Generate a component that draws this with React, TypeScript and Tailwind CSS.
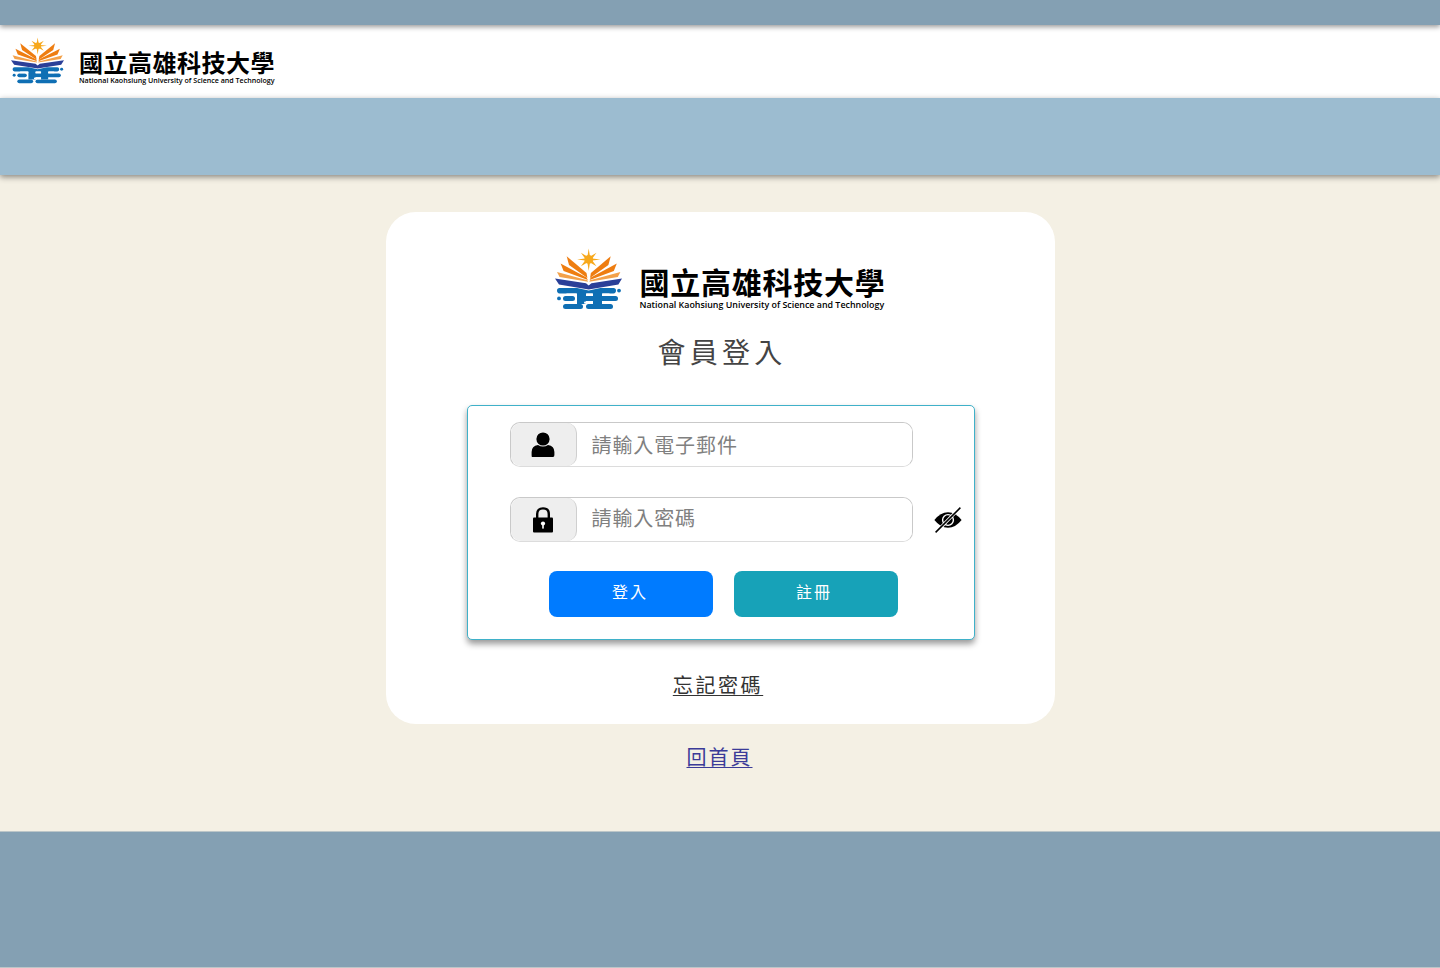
import { useState } from 'react'

const cjk = '"Noto Sans CJK TC", "Noto Sans", sans-serif'

function LogoMark({ className }: { className: string }) {
  return (
    <svg viewBox="0 0 67 62" preserveAspectRatio="none" className={className} aria-hidden="true">
      {/* star */}
      <path
        d="M33.7 0.5 L35 8.6 L41.5 4.8 L37.3 10.4 L45.5 11.4 L37.3 12.6 L41.5 18.2 L35 14.4 L33.7 23 L32.4 14.4 L25.9 18.2 L30.1 12.6 L22 11.4 L30.1 10.4 L25.9 4.8 L32.4 8.6 Z"
        fill="#f7a81b"
      />
      <circle cx="33.7" cy="11.4" r="4.3" fill="#f7a81b" />
      {/* wings */}
      <g fill="#ee7d11">
        <path d="M11.7 8.3 L31.5 25 L32.4 30 L14 17 Z" />
        <path d="M55.7 8.3 L35.9 25 L35 30 L53.4 17 Z" />
        <path d="M5.6 15.6 L31.6 29.4 L32.8 32 L8.6 23 Z" />
        <path d="M61.8 15.6 L35.8 29.4 L34.6 32 L58.8 23 Z" />
      </g>
      <g fill="#f3a14a">
        <path d="M2 24 L32.4 32.2 L33 33.8 L4.6 29 Z" />
        <path d="M65.4 24 L35 32.2 L34.4 33.8 L62.8 29 Z" />
      </g>
      {/* book */}
      <path
        d="M0 30.6 L31 35.3 L33.7 37.6 L36.4 35.3 L67 30.6 L63.4 36.6 L33.7 41.4 L4 36.6 Z"
        fill="#2a3f98"
      />
      {/* water */}
      <g fill="#0f6fb4">
        <path d="M4.5 40 L22 40 L33.7 42.4 L45.4 40 L58.5 40 Q61 40 61 42.6 Q61 45.4 58.5 45.4 L4.5 45.4 Q2 45.4 2 42.6 Q2 40 4.5 40 Z" />
        <circle cx="64" cy="42.6" r="1.9" />
        <circle cx="4" cy="50.4" r="1.9" />
        <rect x="8" y="48" width="12" height="5" rx="2.5" />
        <rect x="22" y="44" width="9" height="12" />
        <rect x="38" y="44" width="9" height="12" />
        <rect x="26" y="48" width="16" height="5" />
        <rect x="44" y="48" width="19" height="5" rx="2.5" />
        <rect x="8" y="56" width="20" height="5" rx="2.5" />
        <rect x="31" y="56" width="27" height="5" rx="2.5" />
      </g>
      <g fill="#fff">
        <rect x="11" y="45.6" width="11" height="2.2" rx="1.1" />
        <rect x="31" y="45.6" width="7" height="2.2" rx="1.1" />
        <rect x="47" y="45.6" width="8" height="2.2" rx="1.1" />
        <rect x="29" y="53.4" width="9" height="2.4" rx="1.2" />
      </g>
    </svg>
  )
}

function UserIcon() {
  return (
    <svg viewBox="0 0 24 26" className="h-[26px] w-[24px]" aria-hidden="true">
      <circle cx="12" cy="7" r="6.6" fill="#000" />
      <path d="M1 25 Q0.6 25 0.6 23 L0.6 20 Q0.6 14 7 13 Q12 16 17 13 Q23.4 14 23.4 20 L23.4 23 Q23.4 25 22 25 Z" fill="#000" />
    </svg>
  )
}

function LockIcon() {
  return (
    <svg viewBox="0 0 20 26" className="h-[26px] w-[20px]" aria-hidden="true">
      <path d="M4.2 12 L4.2 7 Q4.2 1.4 10 1.4 Q15.8 1.4 15.8 7 L15.8 12" fill="none" stroke="#000" strokeWidth="2.4" />
      <path d="M1 10.5 L19 10.5 Q20 10.5 20 11.5 L20 24.5 Q20 25.5 19 25.5 L1 25.5 Q0 25.5 0 24.5 L0 11.5 Q0 10.5 1 10.5 Z" fill="#000" />
      <circle cx="10" cy="16.5" r="2.1" fill="#fff" />
      <rect x="9.2" y="17" width="1.6" height="4.6" fill="#fff" />
    </svg>
  )
}

function EyeSlashIcon() {
  return (
    <svg viewBox="0 0 28 26" className="h-[26px] w-[28px]" aria-hidden="true">
      <path d="M0.4 13 Q6.5 5.2 14 5.2 Q21.5 5.2 27.6 13 Q21.5 20.8 14 20.8 Q6.5 20.8 0.4 13 Z" fill="#000" />
      <circle cx="14" cy="13" r="5.4" fill="none" stroke="#fff" strokeWidth="1.4" />
      <path d="M26 0.6 L2 25.4" stroke="#fff" strokeWidth="3.2" />
      <path d="M26.4 0.6 L1.6 25.4" stroke="#000" strokeWidth="1.5" />
    </svg>
  )
}

function InputRow({
  icon,
  placeholder,
  type,
  inputClass,
  trailing,
}: {
  icon: React.ReactNode
  placeholder: string
  type: string
  inputClass: string
  trailing?: React.ReactNode
}) {
  return (
    <div className="flex items-center">
      <div className="flex h-[45px] w-[403px] overflow-hidden rounded-[10px] border border-[#c9c9c9] border-b-[#dcdcdc]">
        <span className="flex w-[66px] shrink-0 items-center justify-center rounded-[10px] border-r border-[#cfcfcf] bg-[#eeeeee]">
          {icon}
        </span>
        <input
          type={type}
          placeholder={placeholder}
          className={`min-w-0 flex-1 bg-white pl-[15px] text-[20px] tracking-[0.9px] text-black outline-none placeholder:text-[#808080] ${inputClass}`}
        />
      </div>
      {trailing}
    </div>
  )
}

export default function App() {
  const [showPassword, setShowPassword] = useState(false)

  return (
    <div className="flex min-h-[968px] flex-col bg-[#f4f0e4]" style={{ fontFamily: cjk }}>
      <div className="relative z-20 h-[25px] bg-[#84a0b3] shadow-[0_2px_5px_rgba(0,0,0,0.4)]" />

      <header className="flex h-[73px] items-start bg-white pl-[11px] pt-[12px]">
        <LogoMark className="h-[47px] w-[53px]" />
        <div className="ml-[15px] mt-[13px] flex flex-col text-black">
          <span className="text-[24px] font-bold leading-[24px] tracking-[0.5px] whitespace-nowrap">國立高雄科技大學</span>
          <span className="mt-[2px] text-[7.1px] font-semibold leading-[9px] whitespace-nowrap" style={{ fontFamily: '"Open Sans", sans-serif' }}>
            National Kaohsiung University of Science and Technology
          </span>
        </div>
      </header>

      <div className="relative z-10 h-[77px] bg-[#9cbcd0] shadow-[0_2px_6px_rgba(0,0,0,0.45)]" />

      <main className="flex flex-1 flex-col items-center pt-[37px]">
        <div className="flex h-[512px] w-[669px] flex-col items-center rounded-[30px] bg-white pt-[36px]">
          <div className="flex items-start">
            <LogoMark className="h-[62px] w-[67px]" />
            <div className="ml-[18px] mt-[18px] flex w-[246px] flex-col text-black">
              <span className="text-[30px] font-bold leading-[30px] tracking-[0.75px] whitespace-nowrap">國立高雄科技大學</span>
              <span className="mt-[3px] text-[8.9px] font-semibold leading-[11px] whitespace-nowrap" style={{ fontFamily: '"Open Sans", sans-serif' }}>
                National Kaohsiung University of Science and Technology
              </span>
            </div>
          </div>

          <h1 className="mt-[19px] pl-[4px] text-[28px] font-normal leading-[44px] tracking-[4.3px] text-[#444444]">會員登入</h1>

          <div className="ml-[1px] mt-[32px] flex h-[235px] w-[508px] flex-col rounded-[5px] border border-[#3fb1c9] bg-white pl-[42px] pt-[16px] shadow-[0_4px_6px_rgba(0,0,0,0.4)]">
            <InputRow icon={<UserIcon />} placeholder="請輸入電子郵件" type="email" inputClass="pb-0" />
            <div className="mt-[30px]">
              <InputRow
                icon={<LockIcon />}
                placeholder="請輸入密碼"
                type={showPassword ? 'text' : 'password'}
                inputClass="pb-[4px]"
                trailing={
                  <button type="button" onClick={() => setShowPassword(!showPassword)} className="ml-[21px] flex">
                    <EyeSlashIcon />
                  </button>
                }
              />
            </div>
            <div className="mt-[29px] flex gap-[21px] pl-[39px]">
              <button type="button" className="h-[46px] w-[164px] rounded-[8px] bg-[#007bff] pb-[6px] pr-[1px] text-[16px] tracking-[2px] text-white">
                登入
              </button>
              <button type="button" className="h-[46px] w-[164px] rounded-[8px] bg-[#17a2b8] pb-[6px] pr-[3px] text-[16px] tracking-[2px] text-white">
                註冊
              </button>
            </div>
          </div>

          <a href="#" className="mt-[29px] pr-[4px] text-[20px] leading-[32px] tracking-[2.6px] text-[#333333] underline decoration-1 underline-offset-[2px]">
            忘記密碼
          </a>
        </div>

        <a href="#" className="mt-[17px] pr-[1px] text-[20px] leading-[32px] tracking-[2px] text-[#3b3b98] underline decoration-1 underline-offset-[2px]">
          回首頁
        </a>
      </main>

      <footer className="h-[137px] border-y border-[#bcc6c8] bg-[#84a0b3]" />
    </div>
  )
}
